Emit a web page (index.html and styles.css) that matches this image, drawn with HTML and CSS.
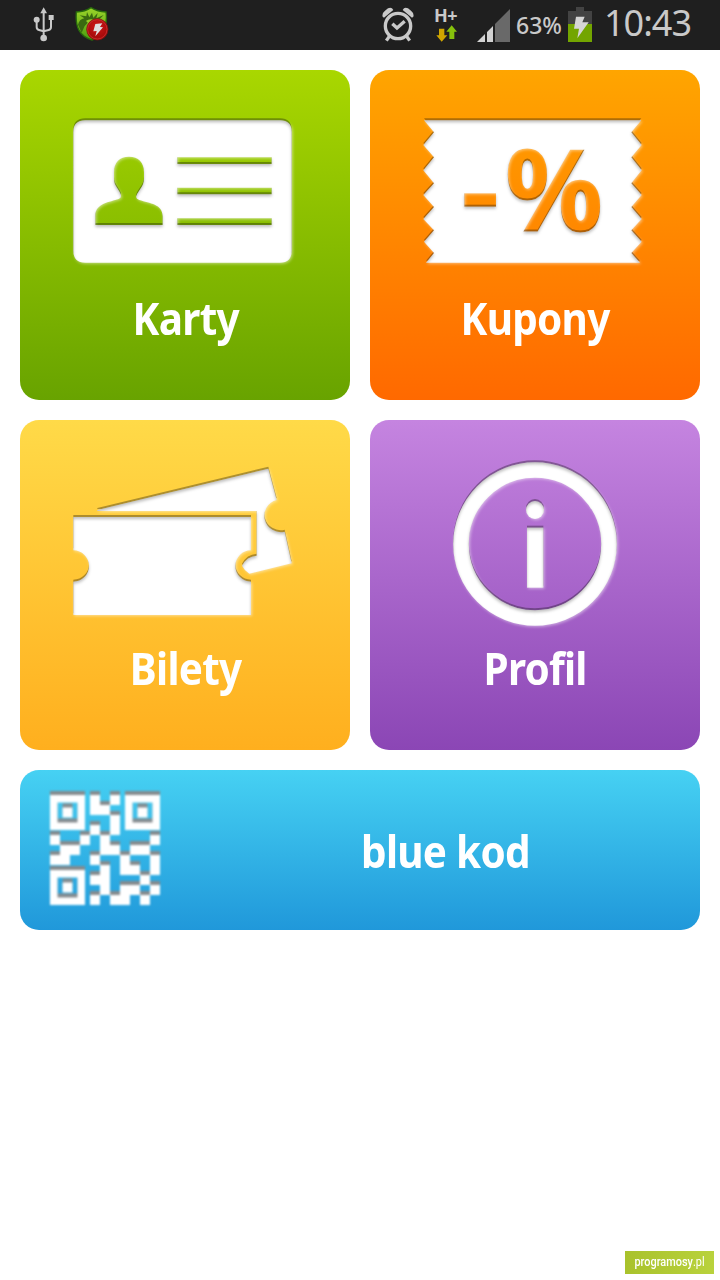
FILE: index.html
```html
<!DOCTYPE html>
<html lang="pl">
<head>
    <meta charset="UTF-8">
    <meta name="viewport" content="width=device-width, initial-scale=1.0">
    <title>blue kod</title>
    <link rel="stylesheet" href="styles.css">
</head>
<body>
    <!-- shared filter: dark top edge, soft inner shadow, light glow -->
    <svg class="defs" width="0" height="0">
        <defs>
            <filter id="cut" x="-20%" y="-20%" width="140%" height="140%" color-interpolation-filters="sRGB">
                <feOffset in="SourceAlpha" dy="-6" result="up"/>
                <feGaussianBlur in="up" stdDeviation="0.8" result="upSoft"/>
                <feFlood flood-color="#000" flood-opacity="0.32"/>
                <feComposite in2="upSoft" operator="in" result="edge"/>
                <feOffset in="SourceAlpha" dx="4" dy="4"/>
                <feGaussianBlur stdDeviation="5" result="glowShape"/>
                <feFlood flood-color="#fff" flood-opacity="0.5"/>
                <feComposite in2="glowShape" operator="in" result="glow"/>
                <feOffset in="SourceAlpha" dy="7"/>
                <feGaussianBlur stdDeviation="5" result="innerShape"/>
                <feFlood flood-color="#000" flood-opacity="0.25"/>
                <feComposite in2="innerShape" operator="out"/>
                <feComposite in2="SourceAlpha" operator="in" result="inner"/>
                <feMerge>
                    <feMergeNode in="glow"/>
                    <feMergeNode in="edge"/>
                    <feMergeNode in="SourceGraphic"/>
                    <feMergeNode in="inner"/>
                </feMerge>
            </filter>
        </defs>
    </svg>
    <div class="screen">
        <header class="status">
            <div class="status-left">
                <svg class="usb" width="22" height="35" viewBox="0 0 66 105">
                    <g fill="none" stroke="#c9c9c9" stroke-width="6">
                        <path d="M32 15V92M11 40V60Q11 67 18 69L32 73M54 32V60Q54 67 47 69L32 73"/>
                    </g>
                    <g fill="#c9c9c9">
                        <path d="M32 1L42 19H22Z"/>
                        <circle cx="11" cy="38" r="9"/>
                        <rect x="47" y="24" width="15" height="15"/>
                        <circle cx="32" cy="93" r="10"/>
                    </g>
                </svg>
                <svg class="shield" width="35" height="35" viewBox="0 0 105 105">
                    <defs>
                        <linearGradient id="sh" x2="0" y2="1"><stop stop-color="#9bd52a"/><stop offset="1" stop-color="#4b9c10"/></linearGradient>
                        <radialGradient id="rd" cy="0.35"><stop stop-color="#cf1717"/><stop offset="1" stop-color="#a90b0b"/></radialGradient>
                    </defs>
                    <path d="M48 2Q67 14 93 15Q98 47 85 71Q74 91 51 99Q24 91 12 70Q1 50 4 15Q31 14 48 2Z" fill="url(#sh)" stroke="#286a0c" stroke-width="4"/>
                    <path d="M9 53Q13 37 28 34L14 25L34 28L36 15L43 31L51 17L55 32L68 18L64 34L86 24L71 39L88 42L60 44Q34 42 25 66L20 77Z" fill="#3a6a10"/>
                    <path d="M32 42Q49 31 65 43Q47 45 37 58Q42 46 32 42Z" fill="#98ce29"/>
                    <circle cx="67" cy="67" r="32" fill="url(#rd)" stroke="#850d0d" stroke-width="2"/>
                    <circle cx="67" cy="67" r="29" fill="none" stroke="#cf3a3a" stroke-width="2"/>
                    <path d="M61 51L82 49L75 60L84 61L61 88L65 72L55 73Z" fill="#dedede"/>
                </svg>
            </div>
            <div class="status-right">
                <svg class="alarm" width="32" height="35" viewBox="0 0 96 105">
                    <g fill="none" stroke="#c9c9c9">
                        <circle cx="48" cy="57" r="38" stroke-width="10"/>
                        <path d="M31 50L45 63L68 43" stroke-width="10"/>
                        <path d="M22 88L13 101M74 88L83 101" stroke-width="10"/>
                    </g>
                    <path d="M2 29Q-1 19 9 11L18 4Q29 -1 34 9L6 32ZM94 29Q97 19 87 11L78 4Q67 -1 62 9L90 32Z" fill="#c9c9c9"/>
                </svg>
                <div class="net">
                    <span>H+</span>
                    <svg width="22" height="17" viewBox="0 0 66 51">
                        <path d="M6 11H22V31H31L14 50L-2 31H6Z" fill="#cfa600"/>
                        <path d="M37 42V20H28L44 1L60 20H52V42Z" fill="#86c10c"/>
                    </svg>
                </div>
                <svg class="signal" width="33" height="33" viewBox="0 0 99 99">
                    <path d="M0 99L24 75V99ZM30 69L48 51V99H30Z" fill="#d2d2d2"/>
                    <path d="M54 45L99 0V99H54Z" fill="#696969"/>
                </svg>
                <span class="percent">63%</span>
                <svg class="battery" width="24" height="35" viewBox="0 0 72 105">
                    <path d="M24 0H48V12H72V51H0V12H24Z" fill="#434343"/>
                    <rect y="51" width="72" height="54" fill="#73a500"/>
                    <path d="M24 29H50L43 46H62L28 94L33 65H18Z" fill="#d6d6d6"/>
                </svg>
                <span class="time">10:43</span>
            </div>
        </header>

        <main class="tiles">
            <a class="tile karty">
                <svg class="icon" viewBox="0 0 750 510">
                    <path filter="url(#cut)" fill="#fff" fill-rule="evenodd" d="M76 46H660Q695 46 695 81V437Q695 473 660 473H76Q40 473 40 437V81Q40 46 76 46Z
                        M106 360V332C106 295 150 291 176 282Q186 278 182 268C177 251 162 244 162 221V202C162 172 179 155 207 155S252 172 252 202V221C252 244 234 257 229 273Q226 281 238 285C269 295 308 297 308 334V360Z
                        M352 157H635V177H352ZM352 248H635V268H352ZM352 340H635V360H352Z"/>
                </svg>
                <span class="label">Karty</span>
            </a>
            <a class="tile kupony">
                <svg class="icon" viewBox="0 0 750 510">
                    <mask id="discount" maskUnits="userSpaceOnUse" x="0" y="0" width="750" height="510">
                        <rect width="750" height="510" fill="#fff"/>
                        <rect x="163" y="265" width="95" height="40"/>
                        <text class="discount" x="284" y="376" textLength="295" lengthAdjust="spacingAndGlyphs">%</text>
                    </mask>
                    <g filter="url(#cut)">
                        <path mask="url(#discount)" fill="#fff" d="M42 46H694L664 82L695 120L664 157L695 196L664 235L695 270L664 306L695 342L664 376L695 410L664 444L690 473H48L72 444L42 410L72 376L40 342L72 306L40 270L72 235L40 196L72 157L40 120L72 82Z"/>
                    </g>
                </svg>
                <span class="label">Kupony</span>
            </a>
            <a class="tile bilety">
                <svg class="icon" viewBox="0 0 750 510">
                    <g filter="url(#cut)" fill="#fff">
                        <path d="M112 165L625 41L650 135A47 47 0 0 0 674 230L695 325L568 356Q554 348 546 332Q560 304 590 302V168H112Z"/>
                        <path d="M40 186H573V286A47 47 0 0 0 573 380V480H40V380A47 47 0 0 0 40 286Z"/>
                    </g>
                </svg>
                <span class="label">Bilety</span>
            </a>
            <a class="tile profil">
                <svg class="icon" viewBox="0 0 750 510">
                    <g filter="url(#cut)">
                        <circle cx="375" cy="267" r="222" fill="none" stroke="#fff" stroke-width="47"/>
                        <circle cx="375" cy="165" r="27" fill="#fff"/>
                        <rect x="351" y="218" width="49" height="180" fill="#fff"/>
                    </g>
                </svg>
                <span class="label">Profil</span>
            </a>
            <a class="tile kod">
                <svg class="qr" width="110" height="114" viewBox="0 -4 110 114">
                    <defs>
                        <path id="qr" fill-rule="evenodd" d="M0 0H35V35H0ZM7.5 7.5V27.5H27.5V7.5ZM12.5 12.5H22.5V22.5H12.5Z
                            M75 0H110V35H75ZM82.5 7.5V27.5H102.5V7.5ZM87.5 12.5H97.5V22.5H87.5Z
                            M0 75H35V110H0ZM7.5 82.5V102.5H27.5V82.5ZM12.5 87.5H22.5V97.5H12.5Z
                            M40 0h10v10h10v10h-20ZM60 0h10v10h-10ZM60 20h10v20h-10ZM40 30h10v10h-10Z
                            M0 40h10v10h-10ZM30 40h10v10h-10ZM50 40h10v10h10v10h-20ZM100 40h10v10h-10Z
                            M10 50h20v10h-10v10h-20v-10h10ZM80 50h20v10h-20ZM40 60h10v10h-10Z
                            M70 60h10v10h10v10h-20ZM100 60h10v20h-10Z
                            M50 70h10v30h-10v-10h-10v-10h10ZM90 80h10v10h-10Z
                            M70 90h20v10h-10v10h-20v-10h10ZM100 90h10v10h-10ZM40 100h10v10h-10ZM90 100h10v10h-10Z"/>
                    </defs>
                    <use href="#qr" y="-4" fill="#858b8e"/>
                    <use href="#qr" fill="#fff"/>
                </svg>
                <span class="label">blue kod</span>
            </a>
        </main>

        <footer class="badge"><p>programosy<span>.pl</span></p></footer>
    </div>
</body>
</html>
```
FILE: styles.css
```css
* {
    box-sizing: border-box;
}
body {
    margin: 0;
    background: #fff;
    font-family: "Noto Sans", "Open Sans", sans-serif;
}
.defs {
    display: block;
}
.screen {
    display: flex;
    flex-direction: column;
    height: 1280px;
    width: 720px;
}
.status {
    display: flex;
    justify-content: space-between;
    height: 50px;
    padding: 7px 30px 0 33px;
    background: #1f1f1f;
    color: #c9c9c9;
}
.status-left, .status-right {
    display: flex;
    align-items: flex-start;
}
.shield {
    margin-left: 20px;
}
.net {
    width: 24px;
    margin-left: 20px;
    font-size: 18px;
    font-weight: 700;
    line-height: 17px;
}
.net span {
    display: block;
    letter-spacing: -0.5px;
}
.net svg {
    display: block;
    margin: 1px 0 0 3px;
    overflow: visible;
}
.signal {
    margin: 2px 0 0 19px;
}
.percent {
    width: 51px;
    margin-left: 6px;
    font-size: 23px;
    font-weight: 500;
    line-height: 36px;
    white-space: nowrap;
}
.battery {
    margin-left: 1px;
}
.time {
    width: 86px;
    margin-left: 12px;
    font-size: 36px;
    font-weight: 400;
    line-height: 32px;
    letter-spacing: -1px;
    white-space: nowrap;
}
.tiles {
    display: grid;
    grid-template-columns: 330px 330px;
    gap: 20px;
    padding: 20px;
}
.tile {
    display: flex;
    flex-direction: column;
    align-items: center;
    height: 330px;
    padding-top: 35px;
    border-radius: 19px;
    color: #fff;
}
.karty {
    background: linear-gradient(#a9d700, #68a300);
}
.kupony {
    background: linear-gradient(#ffa500, #ff6900);
}
.bilety {
    background: linear-gradient(#ffda48, #ffaf1e);
}
.profil {
    background: linear-gradient(#c584e0, #8b46b5);
}
.kod {
    grid-column: 1 / 3;
    flex-direction: row;
    align-items: flex-start;
    height: 160px;
    padding: 21px 0 0 30px;
    background: linear-gradient(#46d1f3, #2098da);
}
.icon {
    width: 250px;
    height: 170px;
    overflow: visible;
}
.qr {
    overflow: visible;
    filter: blur(0.8px);
}
.discount {
    font-family: "Open Sans", sans-serif;
    font-size: 330px;
    font-weight: 600;
    stroke: #000;
    stroke-width: 9px;
}
.label {
    margin: 13px 0 0 1px;
    font-size: 44px;
    font-weight: 700;
    line-height: 60px;
    letter-spacing: -0.8px;
    transform: scaleX(0.92);
}
.kod .label {
    flex: 1;
    margin: 30px 15px 0 46px;
    text-align: center;
}
.badge {
    align-self: flex-end;
    width: 89px;
    height: 23px;
    margin: auto 6px 6px 0;
    background: linear-gradient(90deg, #a9c22c, #b9d23c);
    color: #fff;
    font-family: Roboto, sans-serif;
    font-size: 13px;
    font-weight: 500;
    line-height: 22px;
    text-align: center;
}
.badge p {
    margin: 0;
    transform: scaleX(0.84);
}
.badge span {
    font-weight: 400;
}
```
